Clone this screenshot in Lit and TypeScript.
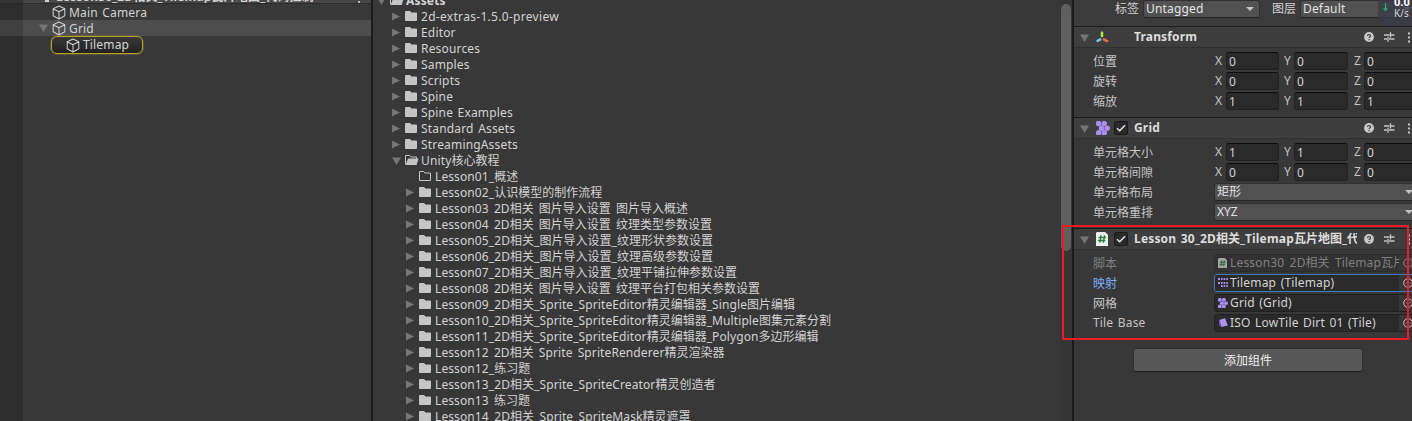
import { LitElement, html, svg, css, nothing } from "lit";
import { customElement } from "lit/decorators.js";
import { classMap } from "lit/directives/class-map.js";

type Item = [string, number, string];

const cube = html`<svg class="cube" width="14" height="15" viewBox="0 0 14 15" fill="none" stroke="#d0d0d0" stroke-width="1.05" stroke-linejoin="round"><path d="M7 1 L12.8 3.8 V10.8 L7 14 L1.2 10.8 V3.8Z M1.2 3.8 L7 6.8 L12.8 3.8 M7 6.8 V14"/></svg>`;

const folder = html`<svg class="folder" width="14" height="12" viewBox="0 0 14 12"><path fill="#c4c4c4" d="M0 1.2 Q0 0 1 0 H5 L6.4 1.6 H11.2 Q12 1.6 12 2.4 V9.2 Q12 10 11.2 10 H.8 Q0 10 0 9.2Z"/></svg>`;
const folderOpen = html`<svg class="folder" width="14" height="12" viewBox="0 0 14 12"><path fill="none" stroke="#c4c4c4" d="M.5 9.5 V.5 H4.6 L6 2 H11.5 V4"/><path fill="#c4c4c4" d="M3 3.6 H13.6 L11.6 10 H.6Z"/></svg>`;
const folderEmpty = html`<svg class="folder" width="14" height="12" viewBox="0 0 14 12"><path fill="none" stroke="#c4c4c4" d="M.5 9.5 V.5 H4.6 L6 2 H11.5 V9.5Z"/></svg>`;

const right = html`<svg class="tri" width="9" height="10" viewBox="0 0 9 10"><path fill="#757575" d="M0 .5 L8 4.5 L0 8.5Z"/></svg>`;
const down = html`<svg class="tri" width="9" height="10" viewBox="0 0 9 10"><path fill="#757575" d="M0 1.4 H9 L4.5 9Z"/></svg>`;

const help = html`<svg width="10" height="10" viewBox="0 0 10 10"><circle cx="5" cy="5" r="4.9" fill="#c8c8c8"/><path d="M3.5 4 Q3.5 2.5 5 2.5 Q6.6 2.5 6.6 3.8 Q6.6 4.6 5.6 5.1 Q5.1 5.4 5.1 6.1 M5.1 7 V8.2" fill="none" stroke="#3c3c3c" stroke-width="1.2"/></svg>`;
const preset = html`<svg width="11" height="10" viewBox="0 0 11 10" stroke="#c4c4c4" fill="none"><path d="M0 3 H5.5 M7 3 H10.5 M6.5 .3 V5.5 M0 7 H3 M5 7 H10.5 M4 4.7 V9.8" stroke-width="1.3"/></svg>`;
const dots = html`<svg width="3" height="11" viewBox="0 0 3 11" fill="#c4c4c4"><path d="M0 .5h2v2H0zM0 4.5h2v2H0zM0 8.5h2v2H0z"/></svg>`;
const check = html`<svg width="10" height="8" viewBox="0 0 10 8"><path d="M1 4.2 L3.7 6.8 L9 1.2" fill="none" stroke="#e4e4e4" stroke-width="1.5"/></svg>`;
const caret = html`<svg class="caret" width="8" height="4" viewBox="0 0 8 4"><path d="M0 0H8L4 4Z" fill="#c4c4c4"/></svg>`;

const gridDots = [[2.6, 2.6], [8.2, 2.6], [5.5, 7.2], [11.2, 7.2], [2.6, 11.8], [8.2, 11.8]];
const gridIcon = (n: number) => html`<svg width=${n} height=${n} viewBox="0 0 14 14" fill="#a98ff0">${gridDots.map(
  ([x, y]) => svg`<circle cx=${x} cy=${y} r="2.75"/>`
)}</svg>`;
const tilemapIcon = html`<svg width="10" height="10" viewBox="0 0 10 10" fill="#a98ff0"><path d="M0 0h2v2H0zM3 0h1.6v2H3zM5.6 0h1.6v2H5.6zM8.2 0h1.6v2H8.2zM0 4h2v2H0zM3 4h1.6v2H3zM5.6 4h1.6v2H5.6zM8.2 4h1.6v2H8.2zM3 7h1.6v2H3zM5.6 7h1.6v2H5.6zM8.2 7h1.6v2H8.2z"/></svg>`;
const tileIcon = html`<svg width="10" height="10" viewBox="0 0 10 10"><path d="M1.2 2 L7 .3 L9.8 7.4 L3.4 9Z" fill="#b094f5"/><path d="M1.2 2 L3.4 9 L1 7.2Z" fill="#6c58a8"/></svg>`;
const scriptIcon = (n: number) => html`<svg width=${n} height=${(n * 14) / 12} viewBox="0 0 12 14"><path d="M1 0H9L12 3V14H0V1Z" fill="#f0f0f0"/><path d="M5 3.2 L3.9 10.8 M8.5 3.2 L7.4 10.8 M2.5 5.5 H10 M2 8.5 H9.4" stroke="#2d7a3c" stroke-width="1.3"/></svg>`;
const axes = html`<svg width="14" height="13" viewBox="0 0 14 13" stroke-width="2.6" stroke-linecap="round"><path d="M6 1.7V5" stroke="#a6e84b"/><path d="M4.2 8.4 L1.6 9.9" stroke="#6ac8f5"/><path d="M8 8.4 L11 10" stroke="#f26b3c"/></svg>`;
const target = html`<svg width="10" height="10" viewBox="0 0 10 10"><circle cx="5" cy="5" r="4.3" fill="none" stroke="#bcbcbc"/><circle cx="5" cy="5" r="1.4" fill="#bcbcbc"/></svg>`;

/* Latin runs are spaced slightly wider than ideographs. */
const runs = (s: string) =>
  s.split(/([\u4e00-\u9fff]+)/).map((p, i) => (p ? html`<span class=${i % 2 ? "han" : "lat"}>${p}</span>` : nothing));

const assets: Item[] = [
  ["closed", 0, "2d-extras-1.5.0-preview"],
  ["closed", 0, "Editor"],
  ["closed", 0, "Resources"],
  ["closed", 0, "Samples"],
  ["closed", 0, "Scripts"],
  ["closed", 0, "Spine"],
  ["closed", 0, "Spine Examples"],
  ["closed", 0, "Standard Assets"],
  ["closed", 0, "StreamingAssets"],
  ["open", 0, "Unity核心教程"],
  ["empty", 1, "Lesson01_概述"],
  ["closed", 1, "Lesson02_认识模型的制作流程"],
  ["closed", 1, "Lesson03 2D相关 图片导入设置 图片导入概述"],
  ["closed", 1, "Lesson04 2D相关 图片导入设置 纹理类型参数设置"],
  ["closed", 1, "Lesson05_2D相关_图片导入设置_纹理形状参数设置"],
  ["closed", 1, "Lesson06_2D相关_图片导入设置_纹理高级参数设置"],
  ["closed", 1, "Lesson07_2D相关_图片导入设置_纹理平铺拉伸参数设置"],
  ["closed", 1, "Lesson08 2D相关 图片导入设置 纹理平台打包相关参数设置"],
  ["closed", 1, "Lesson09_2D相关_Sprite_SpriteEditor精灵编辑器_Single图片编辑"],
  ["closed", 1, "Lesson10_2D相关_Sprite_SpriteEditor精灵编辑器_Multiple图集元素分割"],
  ["closed", 1, "Lesson11_2D相关_Sprite_SpriteEditor精灵编辑器_Polygon多边形编辑"],
  ["closed", 1, "Lesson12 2D相关 Sprite SpriteRenderer精灵渲染器"],
  ["closed", 1, "Lesson12_练习题"],
  ["closed", 1, "Lesson13_2D相关_Sprite_SpriteCreator精灵创造者"],
  ["closed", 1, "Lesson13 练习题"],
  ["closed", 1, "Lesson14_2D相关_Sprite_SpriteMask精灵遮罩"],
];

@customElement("app-root")
export class AppRoot extends LitElement {
  static styles = css`
    :host { display: block; }
    * { box-sizing: border-box; }
    svg { display: block; flex: none; }
    .app { position: relative; display: flex; width: 1412px; height: 421px; overflow: hidden; background: #383838; color: #d2d2d2;
      font: 12px/16px "Noto Sans", "Noto Sans CJK SC", sans-serif; white-space: pre; }
    .lat { letter-spacing: 0.17px; word-spacing: 1.2px; }
    .deep .lat { letter-spacing: 0.1px; word-spacing: 1.9px; }
    .wider .lat { letter-spacing: 0.3px; }
    .hierarchy { width: 371px; flex: none; display: flex; flex-direction: column; background: linear-gradient(90deg, #2d2d2d 23px, #383838 23px); }
    .scene { height: 4px; flex: none; overflow: hidden; display: flex; align-items: flex-end; border-bottom: 1px solid #2a2a2a; background: linear-gradient(90deg, #353535 23px, #474747 23px); padding-left: 45px; font-weight: 700; }
    .scene .glyph { width: 4px; height: 2px; margin: 0 7px 1px 0; background: #d0d0d0; }
    .scene .label { line-height: 12px; letter-spacing: 0.16px; }
    .scene .kebab { margin-left: auto; margin-right: 11px; width: 2px; height: 2px; background: #bbb; }
    .node { height: 16px; flex: none; display: flex; align-items: center; padding-left: 52px; }
    .node .lat { padding-top: 2px; }
    .node .cube { margin-right: 3px; margin-top: 1px; }
    .node.parent { padding-left: 39px; background: linear-gradient(90deg, #3f3f3f 23px, #4d4d4d 23px); }
    .node.parent .tri { margin-right: 4px; }
    .pill { height: 18px; width: 92px; display: flex; flex: none; align-items: center; padding-left: 14px; border-radius: 6px; border: 1.5px solid #b5a71c; box-shadow: 0 0 1px 1px #77735088; background: linear-gradient(#383838, #222); margin: 1px 0 0 -1px; }
    .pill .lat { padding-top: 1px; }
    .split { width: 2px; flex: none; background: #1b1b1b; }
    .project { width: 687px; flex: none; display: flex; flex-direction: column; }
    .asset { height: 16px; flex: none; display: flex; align-items: center; padding-left: 19px; }
    .asset.root { padding-left: 4px; margin-top: -7px; font-weight: 700; }
    .asset.deep { padding-left: 33px; }
    .asset .tri { margin-right: 4px; }
    .asset.blank .folder { margin-left: 13px; }
    .asset .folder { margin-right: 2px; }
    .track { width: 12px; flex: none; background: #353535; padding: 4px 1px 0 1px; }
    .thumb { width: 10px; height: 247px; border-radius: 5px; background: #5f5f5f; }
    .inspector { width: 338px; flex: none; display: flex; flex-direction: column; overflow: hidden; background: #383838; }
    .tags { height: 26px; flex: none; display: flex; padding-left: 41px; align-items: flex-start; background: #3c3c3c; }
    .tags .lab { width: 28px; flex: none; line-height: 18px; }
    .tags .lab2 { margin-left: 12px; }
    .tags .pop .lat { margin-top: -1px; }
    .pop { height: 18px; display: flex; align-items: center; flex: none; background: #515151; border: 1px solid #303030; border-bottom-color: #242424; border-radius: 3px; padding: 0 5px 0 2px; color: #e4e4e4; }
    .pop .caret { margin-left: auto; }
    .head { height: 22px; flex: none; display: flex; align-items: center; border-top: 1px solid #1a1a1a; border-bottom: 1px solid #303030; background: #3e3e3e; padding: 1px 0 0 6px; font-weight: 700; color: #dcdcdc; }
    .head .ic { width: 14px; margin: -1px 0 0 7px; display: flex; }
    .head .box { width: 14px; height: 14px; margin: -2px 0 0 4px; border: 1px solid #191919; border-radius: 2px; background: #2a2a2a; display: flex; align-items: center; justify-content: center; }
    .head .box.none { visibility: hidden; }
    .head .title { margin-left: 6px; width: 223px; overflow: hidden; line-height: 16px; margin-top: -1px; }
    .head .tools { margin: -1px 0 0 7px; display: flex; align-items: center; flex: none; }
    .head .tools svg + svg { margin-left: 10px; }
    .head .tools svg:last-child { margin-left: 13px; }
    .rows { padding: 3px 0 6px 19px; flex: none; }
    .row { height: 20px; display: flex; align-items: center; }
    .row .name { width: 122px; flex: none; color: #c4c4c4; padding-top: 1px; }
    .row .name .lat { position: relative; top: -1px; }
    .row .ax { width: 11px; flex: none; color: #c4c4c4; }
    .row .ax.y { margin-left: 5px; width: 10px; }
    .row .ax.z { margin-left: 6px; width: 10px; }
    .num { width: 53px; height: 18px; flex: none; border: 1px solid #212121; border-top-color: #0d0d0d; border-radius: 3px; background: #2a2a2a; padding-left: 2px; line-height: 18px; }
    .num.w { width: 54px; }
    .wide { width: 201px; margin-left: -1px; padding-right: 1px; }
    .obj { width: 205px; height: 18px; margin-left: -1px; flex: none; display: flex; align-items: center; border: 1px solid #212121; border-radius: 3px; background: #2a2a2a; padding-left: 3px; overflow: hidden; }
    .obj .val { margin-left: 2px; width: 169px; overflow: hidden; flex: none; }
    .obj svg[width="9"] { margin-right: 1px; }
    .obj .pick { background: #373737; height: 16px; width: 20px; padding: 3px 3px 3px 4px; flex: none; }
    .row.off .name, .row.off .val { color: #808080; }
    .row.off .val .lat { word-spacing: 2px; }
    .row.off .obj { background: #323232; border-color: #2c2c2c; }
    .row.off svg { opacity: .6; }
    .row.on .name { color: #7baefa; }
    .row.on .obj { border-color: #3a79bb; }
    .add { width: 230px; height: 24px; margin: 9px 0 0 59px; background: #585858; border: 1px solid #303030; border-bottom-color: #202020; border-radius: 3px; text-align: center; line-height: 23px; color: #eee; flex: none; }
    .mark { position: absolute; left: 1062px; top: 225px; width: 347px; height: 115px; border: 2px solid #ed1c24; }
    .net { position: absolute; left: 1378px; top: -9px; width: 40px; height: 35px; border-radius: 8px; background: #393b46cc; color: #d8d8d8; font-size: 10px; line-height: 11px; padding: 5px 0 0 16px; }
    .net b { display: block; color: #fff; font-size: 11px; line-height: 12px; }
    .net svg { position: absolute; left: 5px; top: 12px; }
  `;

  private vec(name: string, v: number[]) {
    return html`<div class="row"><span class="name">${name}</span><span class="ax">X</span><span class="num">${v[0]}</span><span class="ax y">Y</span><span class="num w">${v[1]}</span><span class="ax z">Z</span><span class="num w">${v[2]}</span></div>`;
  }
  private pop(name: string, v: string) {
    return html`<div class="row"><span class="name">${name}</span><div class="pop wide">${v}${caret}</div></div>`;
  }
  private obj(name: string, icon: unknown, v: string, state = "") {
    return html`<div class=${classMap({ row: true, off: state === "off", on: state === "on" })}><span class="name">${runs(name)}</span><div class="obj">${icon}<span class="val">${runs(v)}</span><span class="pick">${target}</span></div></div>`;
  }
  private head(icon: unknown, title: string, box = true) {
    return html`<div class="head">${down}<span class="ic">${icon}</span><span class=${classMap({ box: true, none: !box })}>${check}</span><span class="title">${runs(title)}</span><span class="tools">${help}${preset}${dots}</span></div>`;
  }

  render() {
    return html`<div class="app">
      <section class="hierarchy">
        <div class="scene"><span class="glyph"></span><span class="label">Lesson30_2D相关_Tilemap瓦片地图_代码控制</span><span class="kebab"></span></div>
        <div class="node">${cube}${runs("Main Camera")}</div>
        <div class="node parent">${down}${cube}${runs("Grid")}</div>
        <div class="node"><div class="pill">${cube}${runs("Tilemap")}</div></div>
      </section>
      <div class="split"></div>
      <section class="project">
        <div class="asset root">${down}${folderOpen}${runs("Assets")}</div>
        ${assets.map(
          ([kind, depth, name]) => html`<div class=${classMap({ asset: true, deep: depth === 1, blank: kind === "empty", wider: name.includes("-") })}>
            ${kind === "empty" ? nothing : kind === "open" ? down : right}${kind === "open" ? folderOpen : kind === "empty" ? folderEmpty : folder}${runs(name)}
          </div>`
        )}
      </section>
      <div class="track"><div class="thumb"></div></div>
      <div class="split"></div>
      <section class="inspector">
        <div class="tags"><span class="lab">标签</span><div class="pop" style="width:117px">${runs("Untagged")}${caret}</div><span class="lab lab2">图层</span><div class="pop" style="width:117px">${runs("Default")}${caret}</div></div>
        ${this.head(axes, "Transform", false)}
        <div class="rows">${this.vec("位置", [0, 0, 0])}${this.vec("旋转", [0, 0, 0])}${this.vec("缩放", [1, 1, 1])}</div>
        ${this.head(gridIcon(14), "Grid")}
        <div class="rows">${this.vec("单元格大小", [1, 1, 0])}${this.vec("单元格间隙", [0, 0, 0])}${this.pop("单元格布局", "矩形")}${this.pop("单元格重排", "XYZ")}</div>
        ${this.head(scriptIcon(12), "Lesson 30_2D相关_Tilemap瓦片地图_代码控制")}
        <div class="rows">${this.obj("脚本", scriptIcon(9), "Lesson30 2D相关 Tilemap瓦片地图", "off")}${this.obj("映射", tilemapIcon, "Tilemap (Tilemap)", "on")}${this.obj("网格", gridIcon(10), "Grid (Grid)")}${this.obj("Tile Base", tileIcon, "ISO LowTile Dirt 01 (Tile)")}</div>
        <div class="add">添加组件</div>
      </section>
      <div class="net"><b>0.0</b>K/s<svg width="5" height="9" viewBox="0 0 5 9"><path d="M2.5 0V7M.6 5L2.5 7.6L4.4 5" stroke="#19b36b" fill="none" stroke-width="1.2"/></svg></div>
      <div class="mark"></div>
    </div>`;
  }
}
